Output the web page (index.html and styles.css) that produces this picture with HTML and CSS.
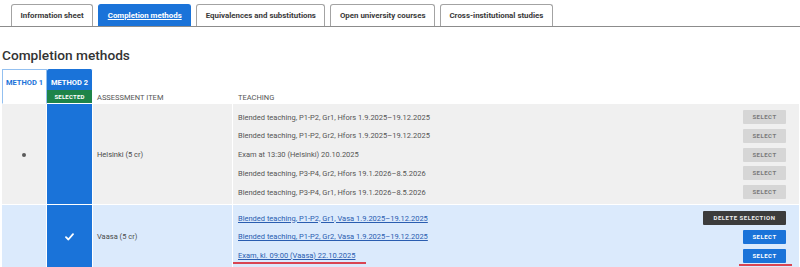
FILE: index.html
```html
<!DOCTYPE html>
<html lang="en">
<head>
<meta charset="utf-8">
<title>Completion methods</title>
<link rel="stylesheet" href="styles.css">
</head>
<body>
<nav class="tabs">
  <a class="tab">Information sheet</a>
  <a class="tab tab-active">Completion methods</a>
  <a class="tab">Equivalences and substitutions</a>
  <a class="tab">Open university courses</a>
  <a class="tab">Cross-institutional studies</a>
</nav>
<main class="content">
  <h2 class="title">Completion methods</h2>
  <table class="methods">
    <colgroup>
      <col class="c-m1">
      <col class="c-m2">
      <col class="c-item">
      <col>
    </colgroup>
    <thead>
      <tr>
        <th class="h-m1"><span class="m-label">METHOD 1</span></th>
        <th class="h-m2"><span class="m-label">METHOD 2</span><span class="badge">SELECTED</span></th>
        <th class="h-label">ASSESSMENT ITEM</th>
        <th class="h-label">TEACHING</th>
      </tr>
    </thead>
    <tbody>
      <tr class="row-gray">
        <td class="cell-m1"><span class="dot"></span></td>
        <td class="cell-m2"></td>
        <td class="cell-item">Helsinki (5 cr)</td>
        <td class="cell-teach">
          <ul class="teach-list">
            <li class="teach"><span>Blended teaching, P1-P2, Gr1, Hfors 1.9.2025–19.12.2025</span><button class="btn btn-gray">SELECT</button></li>
            <li class="teach"><span>Blended teaching, P1-P2, Gr2, Hfors 1.9.2025–19.12.2025</span><button class="btn btn-gray">SELECT</button></li>
            <li class="teach"><span>Exam at 13:30 (Helsinki) 20.10.2025</span><button class="btn btn-gray">SELECT</button></li>
            <li class="teach"><span>Blended teaching, P3-P4, Gr2, Hfors 19.1.2026–8.5.2026</span><button class="btn btn-gray">SELECT</button></li>
            <li class="teach"><span>Blended teaching, P3-P4, Gr1, Hfors 19.1.2026–8.5.2026</span><button class="btn btn-gray">SELECT</button></li>
          </ul>
        </td>
      </tr>
      <tr class="row-blue">
        <td class="cell-m1"></td>
        <td class="cell-m2"><svg class="check" width="9" height="8" viewBox="0 0 9 8"><polyline points="1,4.2 3.4,6.5 8,1.2" fill="none" stroke="#fff" stroke-width="1.8" stroke-linecap="round" stroke-linejoin="round"/></svg></td>
        <td class="cell-item">Vaasa (5 cr)</td>
        <td class="cell-teach">
          <ul class="teach-list">
            <li class="teach"><a class="link">Blended teaching, P1-P2, Gr1, Vasa 1.9.2025–19.12.2025</a><button class="btn btn-dark">DELETE SELECTION</button></li>
            <li class="teach"><a class="link">Blended teaching, P1-P2, Gr2, Vasa 1.9.2025–19.12.2025</a><button class="btn btn-blue">SELECT</button></li>
            <li class="teach"><a class="link flag flag-text">Exam, kl. 09:00 (Vaasa) 22.10.2025</a><button class="btn btn-blue flag flag-btn">SELECT</button></li>
          </ul>
        </td>
      </tr>
    </tbody>
  </table>
</main>
</body>
</html>
```

FILE: styles.css
```css
* { box-sizing: border-box; }

body {
  margin: 0;
  font-family: Roboto, "Liberation Sans", sans-serif;
  color: #333;
  background: #fff;
  overflow: hidden;
}

.tabs {
  display: flex;
  gap: 5px;
  padding: 4px 0 0 11px;
  border-bottom: 1px solid #8c8c8c;
}

.tab {
  height: 22px;
  line-height: 21px;
  padding: 0 8.5px;
  border: 1px solid #a3a3a3;
  border-bottom: none;
  border-radius: 3px 3px 0 0;
  font-size: 7.9px;
  font-weight: 700;
  color: #3a3a3a;
  white-space: nowrap;
}

.tab-active {
  background: #1a73d9;
  border-color: #1a73d9;
  color: #fff;
  text-decoration: underline;
}

.content {
  padding: 0 0 0 2px;
}

.title {
  margin: 19px 0 4px;
  font-size: 13.7px;
  line-height: 19px;
  font-weight: 500;
  color: #333;
}

.methods {
  width: 798px;
  table-layout: fixed;
  border-collapse: separate;
  border-spacing: 0;
  font-size: 7.5px;
  color: #555;
}

.c-m1 { width: 45px; }
.c-m2 { width: 46px; }
.c-item { width: 140px; }

.methods th,
.methods td {
  padding: 0;
  border-right: 1px solid #fff;
  border-bottom: 1px solid #fff;
}

.methods thead th {
  height: 35px;
}

.h-m1 {
  vertical-align: top;
  border: 1px solid #93c0f0 !important;
  border-bottom-color: #fff !important;
  padding-top: 9px !important;
  text-align: center;
}

.h-m2 {
  vertical-align: top;
  background: #1a73d9;
  border-radius: 2px 2px 0 0;
  padding-top: 10px !important;
  text-align: center;
}

.m-label {
  display: block;
  font-size: 7.5px;
  line-height: 8px;
  font-weight: 700;
  color: #1a73d9;
}

.h-m2 .m-label {
  color: #fff;
}

.badge {
  display: block;
  margin-top: 3px;
  height: 13px;
  line-height: 13px;
  background: #1e8449;
  color: #fff;
  font-size: 6px;
  font-weight: 700;
  letter-spacing: 0.2px;
}

.h-label {
  vertical-align: bottom;
  text-align: left;
  padding: 0 0 1px 4px !important;
  font-weight: 400;
  font-size: 7.5px;
  color: #555;
  line-height: 9px;
}

.h-label:last-child {
  padding-left: 5px !important;
}

.row-gray td { background: #f0f0f0; }
.row-blue td { background: #dbeafc; }

.methods td.cell-m2 {
  background: #1a73d9;
  text-align: center;
  vertical-align: middle;
}

.cell-m1 {
  text-align: center;
  vertical-align: middle;
}

.dot {
  display: inline-block;
  width: 4px;
  height: 4px;
  border-radius: 50%;
  background: #5a5a5a;
  vertical-align: middle;
}

.check { display: inline-block; vertical-align: middle; }

.cell-item {
  padding-left: 4px !important;
  vertical-align: middle;
  color: #4a4a4a;
}

.cell-teach {
  padding: 6px 13px 5px 5px !important;
  vertical-align: top;
}

.teach-list {
  list-style: none;
  margin: 0;
  padding: 0;
  display: flex;
  flex-direction: column;
  gap: 4.75px;
}

.teach {
  display: flex;
  justify-content: space-between;
  align-items: center;
  height: 14px;
  color: #555;
}

.link {
  color: #2a5db0;
  text-decoration: underline;
}

.btn {
  height: 14px;
  min-width: 43px;
  padding: 0 5px;
  border: none;
  border-radius: 1px;
  font-family: inherit;
  font-size: 6px;
  font-weight: 700;
  letter-spacing: 0.5px;
  line-height: 14px;
}

.btn-gray { background: #d6d6d6; color: #7a7a7a; }
.btn-blue { background: #1a73d9; color: #fff; }
.btn-dark { background: #3c3c3c; color: #eee; min-width: 83px; }

.flag { position: relative; }
.flag::after {
  content: "";
  position: absolute;
  height: 2px;
  background: #d94452;
}
.flag-text::after { left: -5px; right: -11px; bottom: -4px; }
.flag-btn::after { left: -4px; right: -6px; bottom: -3px; }
```
